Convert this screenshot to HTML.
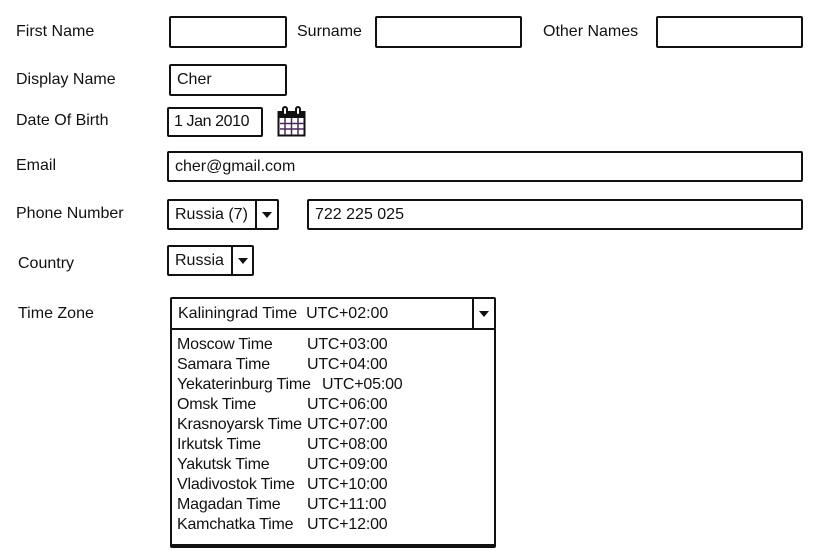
<!DOCTYPE html>
<html><head><meta charset="utf-8"><style>
body{margin:0;width:820px;height:552px;background:#fff;position:relative;font-family:"Liberation Sans",sans-serif;font-size:16px;color:#111;overflow:hidden}
.l{position:absolute;line-height:18px}
.b{position:absolute;box-sizing:border-box;border:2px solid #111;border-radius:2px;background:#fff}
.t{position:absolute;left:6px;top:50%;transform:translateY(-50%);white-space:nowrap}
.d{position:absolute;top:0;bottom:0;border-left:2px solid #111}
.a{position:absolute;width:0;height:0;border-left:5px solid transparent;border-right:5px solid transparent;border-top:6px solid #111;top:50%;margin-top:-3px}
.it{position:absolute;left:177px;white-space:nowrap;line-height:20px;letter-spacing:-0.2px}
.it span{position:absolute;left:130px}
</style></head><body>
<div class="l" style="left:16px;top:23px">First Name</div>
<div class="b" style="left:169px;top:16px;width:118px;height:32px"></div>
<div class="l" style="left:297px;top:23px">Surname</div>
<div class="b" style="left:375px;top:16px;width:147px;height:32px"></div>
<div class="l" style="left:543px;top:23px">Other Names</div>
<div class="b" style="left:656px;top:16px;width:147px;height:32px"></div>

<div class="l" style="left:16px;top:71px">Display Name</div>
<div class="b" style="left:169px;top:64px;width:118px;height:32px"><span class="t">Cher</span></div>

<div class="l" style="left:16px;top:112px">Date Of Birth</div>
<div class="b" style="left:167px;top:107px;width:96px;height:30px"><span class="t" style="left:5px;letter-spacing:-0.4px">1 Jan 2010</span></div>
<svg style="position:absolute;left:277px;top:106px" width="29" height="31" viewBox="0 0 29 31">
<rect x="1.5" y="6" width="26" height="23.5" fill="#fff" stroke="#111" stroke-width="2"/>
<rect x="1.5" y="6" width="26" height="6" fill="#111"/>
<path d="M3 17.5H27M3 23H27M8 12V29M14.5 12V29M21 12V29" stroke="#4a2a5a" stroke-width="1.5"/>
<rect x="6" y="1" width="4" height="8" rx="2" fill="#fff" stroke="#111" stroke-width="2"/>
<rect x="19" y="1" width="4" height="8" rx="2" fill="#fff" stroke="#111" stroke-width="2"/>
</svg>

<div class="l" style="left:16px;top:157px">Email</div>
<div class="b" style="left:167px;top:151px;width:636px;height:31px"><span class="t">cher@gmail.com</span></div>

<div class="l" style="left:16px;top:205px">Phone Number</div>
<div class="b" style="left:167px;top:199px;width:112px;height:31px"><span class="t">Russia (7)</span><div class="d" style="left:86px"></div><div class="a" style="left:93px"></div></div>
<div class="b" style="left:307px;top:199px;width:496px;height:31px"><span class="t">722 225 025</span></div>

<div class="l" style="left:18px;top:255px">Country</div>
<div class="b" style="left:167px;top:245px;width:87px;height:31px"><span class="t">Russia</span><div class="d" style="left:62px"></div><div class="a" style="left:69px"></div></div>

<div class="l" style="left:18px;top:305px">Time Zone</div>
<div class="b" style="left:170px;top:297px;width:326px;height:33px"><span class="t">Kaliningrad Time&nbsp; UTC+02:00</span><div class="d" style="left:300px"></div><div class="a" style="left:307px"></div></div>
<div class="b" style="left:170px;top:328px;width:326px;height:220px;border-bottom-width:4px"></div>
<div class="it" style="top:335px">Moscow Time<span>UTC+03:00</span></div>
<div class="it" style="top:355px">Samara Time<span>UTC+04:00</span></div>
<div class="it" style="top:375px">Yekaterinburg Time<span style="left:145px">UTC+05:00</span></div>
<div class="it" style="top:395px">Omsk Time<span>UTC+06:00</span></div>
<div class="it" style="top:415px">Krasnoyarsk Time<span>UTC+07:00</span></div>
<div class="it" style="top:435px">Irkutsk Time<span>UTC+08:00</span></div>
<div class="it" style="top:455px">Yakutsk Time<span>UTC+09:00</span></div>
<div class="it" style="top:475px">Vladivostok Time<span>UTC+10:00</span></div>
<div class="it" style="top:495px">Magadan Time<span>UTC+11:00</span></div>
<div class="it" style="top:515px">Kamchatka Time<span>UTC+12:00</span></div>
</body></html>
